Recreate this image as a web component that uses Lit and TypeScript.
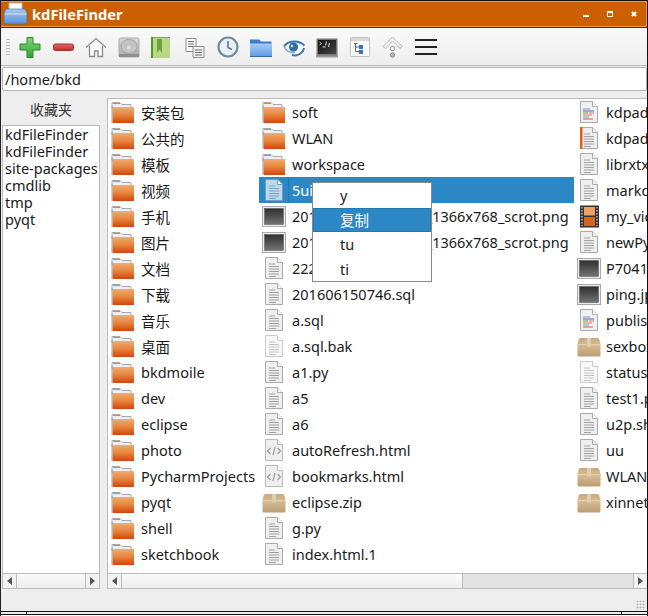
import { css, html, LitElement, svg } from "lit";
import { customElement } from "lit/decorators.js";

type Kind = "folder" | "doc" | "light" | "code" | "orange" | "sel" | "html" | "zip" | "image" | "video";
type Entry = [Kind, string];

const column1: Entry[] = [
  ["folder", "安装包"], ["folder", "公共的"], ["folder", "模板"], ["folder", "视频"], ["folder", "手机"],
  ["folder", "图片"], ["folder", "文档"], ["folder", "下载"], ["folder", "音乐"], ["folder", "桌面"],
  ["folder", "bkdmoile"], ["folder", "dev"], ["folder", "eclipse"], ["folder", "photo"],
  ["folder", "PycharmProjects"], ["folder", "pyqt"], ["folder", "shell"], ["folder", "sketchbook"],
];

const column2: Entry[] = [
  ["folder", "soft"], ["folder", "WLAN"], ["folder", "workspace"], ["sel", "5ui.py"],
  ["image", "2016-0704-1122335_1366x768_scrot.png"], ["image", "2016-0704-1122486_1366x768_scrot.png"],
  ["doc", "222.txt"], ["doc", "201606150746.sql"], ["doc", "a.sql"], ["light", "a.sql.bak"], ["doc", "a1.py"],
  ["doc", "a5"], ["doc", "a6"], ["html", "autoRefresh.html"], ["html", "bookmarks.html"], ["zip", "eclipse.zip"],
  ["doc", "g.py"], ["doc", "index.html.1"],
];

const column3: Entry[] = [
  ["code", "kdpad.py"], ["orange", "kdpad.ui"], ["doc", "librxtx.so"], ["doc", "markdown"], ["video", "my_video.mp4"],
  ["doc", "newPyFile"], ["image", "P7041234.jpg"], ["image", "ping.jpg"], ["code", "publish.py"], ["zip", "sexbox.zip"],
  ["light", "status"], ["doc", "test1.py"], ["doc", "u2p.sh"], ["doc", "uu"], ["zip", "WLAN.zip"], ["zip", "xinnet.zip"],
];

const favourites = ["kdFileFinder", "kdFileFinder", "site-packages", "cmdlib", "tmp", "pyqt"];

const docLines = (color: string) => svg`
  <path d="M7 8h6M7 10.500h10M7 13h10M7 15.500h10M7 18h10M7 20.500h7" stroke=${color} stroke-width="1" fill="none"/>`;

const docShape = (fill: string, edge: string) => svg`
  <path d="M3.500 1.500h12l5 5v16h-17z" fill=${fill} stroke=${edge}/>
  <path d="M15.500 1.500v5h5" fill="#fff" stroke=${edge}/>`;

function fileIcon(kind: Kind) {
  let body;
  switch (kind) {
    case "folder":
      body = svg`
        <path d="M1 2.500h8l2 2h9v4H1z" fill="#eee" stroke="#aaa"/>
        <path d="M2 3.500h7" stroke="#e8804a"/>
        <path d="M1.500 7h21.500v15.500a.5.5 0 0 1-.5.5H2.500a1 1 0 0 1-1-1z" fill="url(#folder)"/>
        <path d="M1 6v17" stroke="#999"/>`;
      break;
    case "doc":
      body = svg`${docShape("#efefef", "#aaa")}${docLines("#a0a0a0")}`;
      break;
    case "light":
      body = svg`${docShape("#f8f8f8", "#ccc")}${docLines("#c4c4c4")}`;
      break;
    case "sel":
      body = svg`${docShape("#bcd8ea", "#6d9dbb")}${docLines("#7aa6c4")}`;
      break;
    case "code":
      body = svg`${docShape("#f0f0f0", "#aaa")}
        <path d="M6 9h7" stroke="#6a9fd0"/><path d="M6 11h11" stroke="#5a5a9a"/>
        <path d="M6 13h5" stroke="#57a957"/><path d="M12 13h5" stroke="#d070b0"/>
        <path d="M6 15h9" stroke="#d08a50"/><path d="M6 17h6" stroke="#6a9fd0"/><path d="M6 19h10" stroke="#c05a70"/>`;
      break;
    case "orange":
      body = svg`${docShape("#efefef", "#aaa")}${docLines("#a0a0a0")}<rect x="3" y="1" width="2.500" height="22" fill="#e2611b"/>`;
      break;
    case "html":
      body = svg`${docShape("#efefef", "#bbb")}
        <path d="M8.500 10l-3 3 3 3M15.500 10l3 3-3 3" fill="none" stroke="#9a9a9a" stroke-width="1.200"/>
        <path d="M13 9l-2 8" stroke="#9a9a9a" stroke-width="1.200"/>`;
      break;
    case "zip":
      body = svg`
        <path d="M4 4h16c1.500 0 2 .5 2.500 2l1 4v11a1.500 1.500 0 0 1-1.500 1.500H2A1.500 1.500 0 0 1 .5 21V10l1-4C2 4.500 2.500 4 4 4z" fill="url(#box)"/>
        <path d="M.5 10.500h23" stroke="#e2cfb2"/>
        <rect x="10" y="4" width="4" height="8.500" fill="#dfcdb0"/>`;
      break;
    case "image":
      body = svg`
        <rect x=".5" y="2.500" width="23" height="20" fill="#ededed" stroke="#aaa"/>
        <rect x="2.500" y="4.500" width="19" height="16" fill="url(#shot)" stroke="#555" stroke-width=".5"/>`;
      break;
    case "video":
      body = svg`
        <rect x="3" y="1.500" width="19" height="22" fill="#333"/>
        <rect x="7" y="3" width="11" height="8.500" fill="#f0a060"/>
        <rect x="7" y="13" width="11" height="9" fill="#d9641e"/>
        <path d="M5 3v19M20 3v19" stroke="#999" stroke-width="2" stroke-dasharray="1.500 1.500"/>`;
      break;
  }
  return html`<svg class="file-icon" viewBox="0 0 24 24">${body}</svg>`;
}

const toolIcons = [
  svg`<path d="M9 2.500h6v6.500h7v6h-7v7.500H9V15H2V9h7z" fill="url(#plus)" stroke="#2a8a2a" stroke-linejoin="round"/>`,
  svg`<rect x="2.500" y="9" width="20" height="6.500" rx="2" fill="url(#minus)" stroke="#a82a2a"/>`,
  svg`<path d="M2 12.500L12 3.500l10 9M5.500 11v10.500h5V16h3.500v5.500h4.500V11" fill="#fafafa" stroke="#8a8a8a" stroke-width="1.300"/>`,
  svg`<rect x="2" y="3" width="20" height="19" rx="1.500" fill="url(#hdd)" stroke="#aaa"/>
      <ellipse cx="12" cy="11.500" rx="8" ry="7" fill="#c4c4c0" stroke="#a4a4a0"/>
      <circle cx="12" cy="12.500" r="2" fill="#ddd"/><rect x="2" y="19" width="20" height="3" fill="#8f8f8b"/>`,
  svg`<rect x="2" y="3" width="18" height="20" fill="#b8d884"/>
      <path d="M2 2.500h18" stroke="#76ab3a"/><path d="M2 2v21" stroke="#4f9a2e" stroke-width="2"/>
      <path d="M7 4h5v14l-2.500-3.500L7 18z" fill="#6da338"/>`,
  svg`<path d="M3 3.500h10v13H3z" fill="#fff" stroke="#8c8c8c"/>
      <path d="M5 6.500h6M5 9h6M5 11.500h6" stroke="#666"/>
      <path d="M10 11.500h11v11H10z" fill="#f4f4f4" stroke="#8c8c8c"/>
      <path d="M12 15h7M12 17.500h7M12 20h7" stroke="#666"/>`,
  svg`<circle cx="12" cy="12" r="9.500" fill="#e8eef2" stroke="#6a8a9e" stroke-width="2.200"/>
      <path d="M12 6v6.500l4 2" fill="none" stroke="#5a7a90" stroke-width="1.600"/>`,
  svg`<path d="M1 4.500h9l2 2h10.500v4H1z" fill="#3f7ccb"/>
      <path d="M1 8.500h22v12.500a1 1 0 0 1-1 1H2a1 1 0 0 1-1-1z" fill="url(#blue)"/>
      <path d="M1 21.500h22" stroke="#3566a8"/>`,
  svg`<path d="M2 11.500C6 5.500 16 4.500 22.500 10.500" fill="none" stroke="#3a76ae" stroke-width="2"/>
      <path d="M2 11.500c2 4 6 6.500 11 6" fill="none" stroke="#7aa8cc" stroke-width="1.500"/>
      <circle cx="11.500" cy="12" r="4.500" fill="#2f6ca4"/><circle cx="10" cy="11" r="1.300" fill="#cfe2f0"/>
      <path d="M10 20c4 1 8 0 11-4l1-3" fill="none" stroke="#3a76ae" stroke-width="2"/>`,
  svg`<rect x="1.500" y="3.500" width="21" height="17.500" fill="#777"/>
      <rect x="3" y="5" width="18" height="14" fill="url(#term)"/>
      <rect x="1" y="20.500" width="22" height="2" fill="#999"/>
      <path d="M4.500 7l2 1.500-2 1.500" fill="none" stroke="#eee" stroke-width=".8"/>
      <path d="M7.500 12h3" stroke="#ddd"/><path d="M11.500 6.500l-1 4M14.500 8l-1 4" stroke="#bbb" stroke-width="1.200"/>`,
  svg`<rect x="2.500" y="2.500" width="19" height="19" rx="1" fill="#fff" stroke="#c0c0c0"/>
      <rect x="3" y="3" width="18" height="3" fill="#d8d8d8"/>
      <path d="M6 8.500h3.500M7.500 8.500v8H11M7.500 12H11" fill="none" stroke="#666"/>
      <rect x="11" y="10" width="4" height="4" fill="#2a76d0"/><rect x="11" y="15" width="4" height="4" fill="#2a76d0"/>`,
  svg`<path d="M2 11.500L11.500 2l9.500 9.500-2 2L11.500 6 4 13.500z" fill="#fff" stroke="#aaa"/>
      <circle cx="11.500" cy="13.500" r="2.200" fill="#fff" stroke="#888"/><circle cx="11.500" cy="20" r="2.200" fill="#bbb" stroke="#888"/>`,
  svg`<path d="M1 4h22v2H1zM1 11h22v2H1zM1 18h22v2H1z" fill="#222"/>`,
];

@customElement("app-root")
export class AppRoot extends LitElement {
  static styles = css`
    :host {
      display: flex;
      flex-direction: column;
      position: relative;
      width: 648px;
      height: 616px;
      box-sizing: border-box;
      overflow: hidden;
      background: #eee;
      border-left: 1px solid #222;
      border-right: 1px solid #111;
      font-family: "Noto Sans", "Noto Sans CJK SC", sans-serif;
      font-size: 14.5px;
      color: #1a1a1a;
    }

    .defs { display: block; width: 0; height: 0; }

    .titlebar {
      display: flex;
      align-items: center;
      flex: none;
      height: 26px;
      box-sizing: border-box;
      margin-left: -1px;
      background: #cc5f00;
      border: 1px solid #f49a2a;
      box-shadow: 0 -1px 0 #111, 0 1px 0 #333;
      margin-top: 1px;
      color: #fff;
      font-weight: 700;
      font-size: 14.700px;
    }
    .titlebar .app { width: 25px; height: 24px; margin: 0 4px 0 2px; }
    .titlebar .name { flex: 1; }
    .wm { display: flex; align-items: center; width: 72px; }
    .wm svg { width: 24px; height: 14px; }

    .toolbar {
      display: flex;
      align-items: center;
      flex: none;
      height: 37px;
      margin-top: 1px;
      background: linear-gradient(#fafafa, #eee);
      border-bottom: 1px solid #b8b8b8;
    }
    .grip { width: 4px; height: 17px; margin: 0 3px 0 5px; background: radial-gradient(#bbb 40%, transparent 50%) 0 0 / 2px 3px; }
    .tool { display: flex; justify-content: center; width: 33px; }
    .tool svg { width: 24px; height: 24px; }

    .address {
      flex: none;
      height: 24px;
      margin: 1px 0 0 1px;
      padding-left: 2px;
      box-sizing: border-box;
      background: #fff;
      border: 1px solid #b4b4b4;
      border-radius: 2px;
      line-height: 22px;
    }

    .panes {
      display: flex;
      flex: none;
      height: 491px;
      margin: 7px 0 0 1px;
    }
    .side { display: flex; flex-direction: column; width: 98px; }
    .side h2 {
      flex: none;
      height: 27px;
      margin: 0;
      font: inherit;
      font-size: 14px;
      line-height: 24px;
      text-align: center;
      color: #333;
    }
    .box {
      display: flex;
      flex-direction: column;
      flex: 1;
      min-height: 0;
      background: #fff;
      border: 1px solid #bbb;
    }
    .favs { flex: 1; padding: 0 0 0 2px; overflow: hidden; }
    .favs div { height: 17px; line-height: 16px; white-space: nowrap; }

    .bar {
      display: flex;
      flex: none;
      height: 14px;
      background: linear-gradient(#fafafa, #eee);
      border-top: 1px solid #bbb;
    }
    .arrow {
      display: flex;
      align-items: center;
      justify-content: center;
      flex: none;
      width: 13px;
      background: #f2f2f2;
    }
    .arrow svg { width: 5px; height: 8px; }
    .arrow.left { border-right: 1px solid #bbb; }
    .arrow.right { border-left: 1px solid #bbb; }
    .thumb { flex: 1; }
    .track { flex: none; width: 170px; background: #e3e3e3; border-left: 1px solid #bbb; }

    .main { margin-left: 7px; flex: 1; min-width: 0; border-right: none; }
    .files { display: flex; flex: 1; overflow: hidden; }
    .col { flex: none; }
    .col.a { width: 151px; }
    .col.b { width: 315px; }
    .col.c { flex: 1; min-width: 0; }

    .row {
      display: flex;
      align-items: center;
      gap: 6px;
      height: 26px;
      padding-left: 3px;
      white-space: nowrap;
      overflow: hidden;
    }
    .col.c .row { gap: 5px; }
    .row.selected { gap: 2px; background: #2b88c5; color: #fff; }
    .row.selected span { align-self: stretch; flex: 1; padding-left: 3px; line-height: 26px; border-left: 1px solid #2778ad; }
    .file-icon { flex: none; width: 24px; height: 24px; }

    .status {
      display: flex;
      justify-content: flex-end;
      align-items: flex-end;
      flex: 1;
      padding: 0 1px 1px 0;
    }
    .sizegrip { width: 10px; height: 10px; background: radial-gradient(#aaa 40%, transparent 50%) 0 0 / 3px 3px; }

    .frame {
      display: flex;
      flex: none;
      height: 4px;
      box-sizing: border-box;
      margin-left: -1px;
      background: #eee;
      border-top: 1px solid #111;
      border-bottom: 1px solid #111;
    }
    .frame i { flex: none; width: 26px; border-right: 1px solid #111; }
    .frame i:last-child { flex: 1; width: auto; border-right: none; }
    .frame i.mid { width: 594px; }
    .foot { flex: none; height: 1px; background: #fff; margin-left: -1px; }

    .menu {
      position: absolute;
      left: 311px;
      top: 182px;
      width: 120px;
      box-sizing: border-box;
      background: #fff;
      border: 1px solid #888;
    }
    .menu div { height: 24.500px; padding-left: 27px; line-height: 24px; }
    .menu .on { background: #2b88c5; color: #fff; box-shadow: inset 0 0 0 1px #2778ad; }
  `;

  private renderColumn(name: string, entries: Entry[]) {
    return html`<div class="col ${name}">
      ${entries.map(([kind, label]) => html`
        <div class="row ${kind === "sel" ? "selected" : ""}">${fileIcon(kind)}<span>${label}</span></div>
      `)}
    </div>`;
  }

  private renderBar(track: boolean) {
    return html`<div class="bar">
      <div class="arrow left"><svg viewBox="0 0 5 8"><path d="M5 0v8L0 4z" fill="#555"/></svg></div>
      <div class="thumb"></div>
      ${track ? html`<div class="track"></div>` : ""}
      <div class="arrow right"><svg viewBox="0 0 5 8"><path d="M0 0v8l5-4z" fill="#555"/></svg></div>
    </div>`;
  }

  protected render() {
    return html`
      <svg class="defs">
        <defs>
          <linearGradient id="folder" x1="0" y1="0" x2="0" y2="1"><stop offset="0" stop-color="#f0ac72"/><stop offset=".5" stop-color="#e6843c"/><stop offset="1" stop-color="#d6440e"/></linearGradient>
          <linearGradient id="box" x1="0" y1="0" x2="0" y2="1"><stop offset="0" stop-color="#c9a97e"/><stop offset=".4" stop-color="#d6bc94"/><stop offset="1" stop-color="#bc9c72"/></linearGradient>
          <linearGradient id="shot" x1="0" y1="0" x2="0" y2="1"><stop offset="0" stop-color="#2f2f2f"/><stop offset="1" stop-color="#737373"/></linearGradient>
          <linearGradient id="plus" x1="0" y1="0" x2="0" y2="1"><stop offset="0" stop-color="#7fd67a"/><stop offset="1" stop-color="#33a533"/></linearGradient>
          <linearGradient id="minus" x1="0" y1="0" x2="0" y2="1"><stop offset="0" stop-color="#e86a6a"/><stop offset="1" stop-color="#c42a2a"/></linearGradient>
          <linearGradient id="hdd" x1="0" y1="0" x2="0" y2="1"><stop offset="0" stop-color="#d8d8d4"/><stop offset="1" stop-color="#a8a8a4"/></linearGradient>
          <linearGradient id="blue" x1="0" y1="0" x2="0" y2="1"><stop offset="0" stop-color="#a8ccf5"/><stop offset="1" stop-color="#5c9ae6"/></linearGradient>
          <linearGradient id="term" x1="0" y1="0" x2="1" y2="1"><stop offset="0" stop-color="#111"/><stop offset="1" stop-color="#444"/></linearGradient>
          <linearGradient id="printer" x1="0" y1="0" x2="0" y2="1"><stop offset="0" stop-color="#a8c8ee"/><stop offset="1" stop-color="#5a8fd6"/></linearGradient>
        </defs>
      </svg>

      <div class="titlebar">
        <svg class="app" viewBox="0 0 25 24">
          <path d="M6 1h13v8H6z" fill="#fff" stroke="#bbb"/>
          <path d="M3 7h19l2 4v9a2 2 0 0 1-2 2H3a2 2 0 0 1-2-2v-9z" fill="url(#printer)" stroke="#3a6aaa" stroke-width=".6"/>
          <path d="M2 12h21" stroke="#d6e6f8"/>
        </svg>
        <span class="name">kdFileFinder</span>
        <div class="wm">
          <svg viewBox="0 0 24 14"><rect x="9" y="8" width="6" height="2" fill="#fff"/></svg>
          <svg viewBox="0 0 24 14"><path d="M9.500 4.500h5v5h-5z" fill="none" stroke="#fff"/><rect x="9" y="4" width="6" height="2" fill="#fff"/></svg>
          <svg viewBox="0 0 24 14"><path d="M10 5l4 4M14 5l-4 4" stroke="#fff" stroke-width="2.200"/></svg>
        </div>
      </div>

      <div class="toolbar">
        <div class="grip"></div>
        ${toolIcons.map((icon) => html`<div class="tool"><svg viewBox="0 0 24 24">${icon}</svg></div>`)}
      </div>

      <div class="address">/home/bkd</div>

      <div class="panes">
        <div class="side">
          <h2>收藏夹</h2>
          <div class="box">
            <div class="favs">${favourites.map((f) => html`<div>${f}</div>`)}</div>
            ${this.renderBar(false)}
          </div>
        </div>
        <div class="box main">
          <div class="files">
            ${this.renderColumn("a", column1)}
            ${this.renderColumn("b", column2)}
            ${this.renderColumn("c", column3)}
          </div>
          ${this.renderBar(true)}
        </div>
      </div>

      <div class="status"><div class="sizegrip"></div></div>
      <div class="frame"><i></i><i class="mid"></i><i></i></div>
      <div class="foot"></div>

      <div class="menu">
        <div>y</div>
        <div class="on">复制</div>
        <div>tu</div>
        <div>ti</div>
      </div>
    `;
  }
}
